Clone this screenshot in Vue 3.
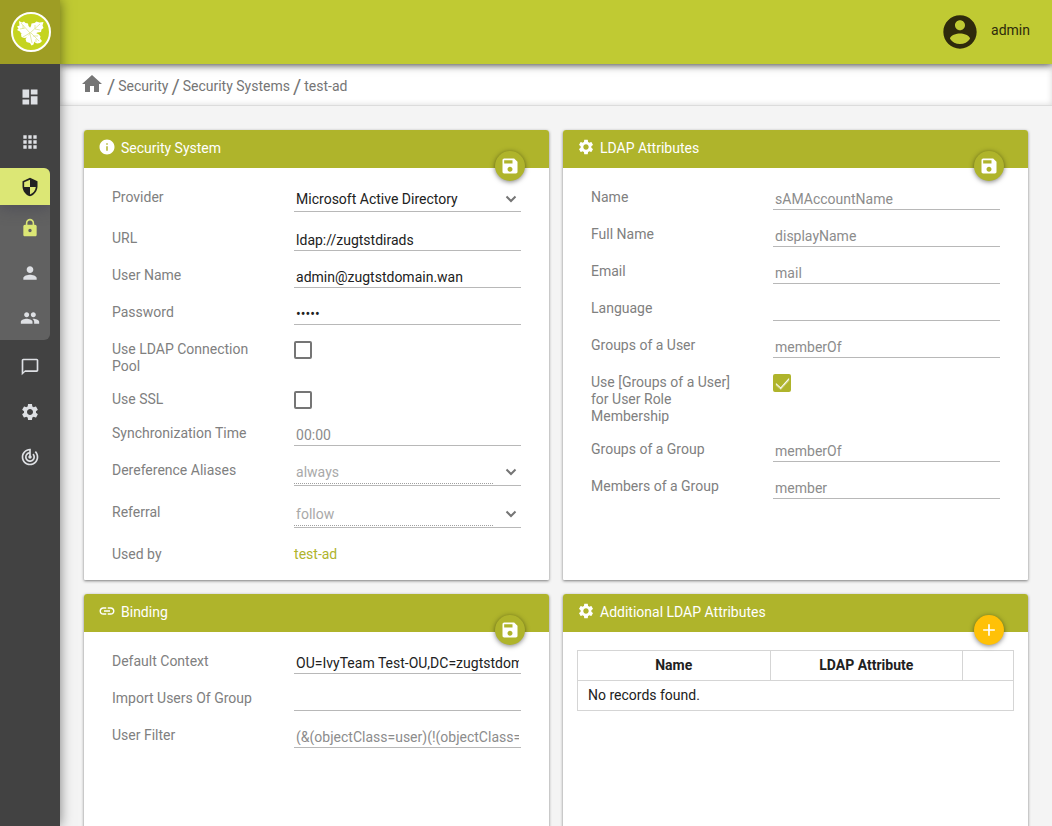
<script setup>
import { ref } from 'vue'

const icons = {
  dashboard: 'M3 13h8V3H3v10zm0 8h8v-6H3v6zm10 0h8V11h-8v10zm0-18v6h8V3h-8z',
  apps: 'M4 8h4V4H4v4zm6 12h4v-4h-4v4zm-6 0h4v-4H4v4zm0-6h4v-4H4v4zm6 0h4v-4h-4v4zm6-10v4h4V4h-4zm-6 4h4V4h-4v4zm6 6h4v-4h-4v4zm0 6h4v-4h-4v4z',
  security: 'M12 1L3 5v6c0 5.55 3.84 10.74 9 12 5.16-1.26 9-6.45 9-12V5l-9-4zm0 10.99h7c-.53 4.12-3.28 7.79-7 8.94V12H5V6.3l7-3.11v8.8z',
  lock: 'M18 8h-1V6c0-2.76-2.24-5-5-5S7 3.24 7 6v2H6c-1.1 0-2 .9-2 2v10c0 1.1.9 2 2 2h12c1.1 0 2-.9 2-2V10c0-1.1-.9-2-2-2zm-6 9c-1.1 0-2-.9-2-2s.9-2 2-2 2 .9 2 2-.9 2-2 2zm3.1-9H8.900V6c0-1.710 1.390-3.100 3.100-3.100 1.710 0 3.100 1.390 3.100 3.100v2z',
  person: 'M12 12c2.210 0 4-1.790 4-4s-1.790-4-4-4-4 1.790-4 4 1.790 4 4 4zm0 2c-2.670 0-8 1.340-8 4v2h16v-2c0-2.660-5.330-4-8-4z',
  people: 'M16 11c1.660 0 2.990-1.340 2.990-3S17.660 5 16 5s-3 1.340-3 3 1.340 3 3 3zm-8 0c1.660 0 2.990-1.340 2.990-3S9.660 5 8 5 5 6.340 5 8s1.340 3 3 3zm0 2c-2.330 0-7 1.170-7 3.500V19h14v-2.500c0-2.330-4.670-3.500-7-3.500zm8 0c-.290 0-.620.020-.970.050 1.160.840 1.970 1.970 1.970 3.450V19h6v-2.500c0-2.330-4.670-3.500-7-3.500z',
  chat: 'M20 2H4c-1.100 0-2 .900-2 2v18l4-4h14c1.100 0 2-.900 2-2V4c0-1.100-.900-2-2-2zm0 14H6l-2 2V4h16v12z',
  settings: 'M19.140 12.940c.040-.300.060-.610.060-.940 0-.320-.020-.640-.070-.940l2.030-1.580c.180-.140.230-.410.120-.610l-1.920-3.320c-.120-.220-.370-.290-.590-.220l-2.390.960c-.500-.380-1.030-.700-1.620-.940l-.360-2.540c-.040-.240-.240-.410-.480-.410h-3.840c-.240 0-.430.170-.470.410l-.360 2.540c-.590.240-1.130.570-1.620.940l-2.390-.960c-.220-.080-.470 0-.590.220L2.740 8.870c-.120.210-.080.470.120.610l2.030 1.580c-.050.300-.090.630-.090.940s.020.640.070.940l-2.030 1.580c-.180.140-.230.410-.120.610l1.920 3.320c.120.220.370.290.590.220l2.390-.960c.500.380 1.030.700 1.620.940l.360 2.540c.050.240.240.410.480.410h3.840c.240 0 .440-.170.470-.410l.360-2.540c.590-.240 1.130-.560 1.620-.940l2.390.960c.220.080.470 0 .590-.220l1.920-3.320c.120-.220.070-.470-.120-.610l-2.010-1.580zM12 15.600c-1.980 0-3.600-1.620-3.600-3.600s1.620-3.600 3.600-3.600 3.600 1.620 3.600 3.600-1.620 3.600-3.600 3.600z',
  track: 'M19.070 4.930l-1.410 1.410C19.100 7.790 20 9.790 20 12c0 4.420-3.580 8-8 8s-8-3.580-8-8c0-4.080 3.050-7.440 7-7.930v2.020C8.160 6.570 6 9.030 6 12c0 3.310 2.690 6 6 6s6-2.690 6-6c0-1.660-.670-3.160-1.760-4.240l-1.410 1.410C15.550 9.900 16 10.900 16 12c0 2.210-1.790 4-4 4s-4-1.790-4-4c0-1.860 1.280-3.410 3-3.860v2.140c-.600.350-1 .980-1 1.720 0 1.100.900 2 2 2s2-.900 2-2c0-.740-.400-1.380-1-1.720V2h-1C6.480 2 2 6.480 2 12s4.480 10 10 10 10-4.480 10-10c0-2.760-1.120-5.260-2.930-7.070z',
  home: 'M10 20v-6h4v6h5v-8h3L12 3 2 12h3v8z',
  account: 'M12 2C6.480 2 2 6.480 2 12s4.480 10 10 10 10-4.480 10-10S17.520 2 12 2zm0 3c1.660 0 3 1.340 3 3s-1.340 3-3 3-3-1.340-3-3 1.340-3 3-3zm0 14.200c-2.500 0-4.710-1.280-6-3.220.030-1.990 4-3.080 6-3.080 1.990 0 5.970 1.090 6 3.080-1.290 1.940-3.500 3.220-6 3.220z',
  info: 'M12 2C6.480 2 2 6.480 2 12s4.480 10 10 10 10-4.480 10-10S17.520 2 12 2zm1 15h-2v-6h2v6zm0-8h-2V7h2v2z',
  link: 'M3.900 12c0-1.710 1.390-3.100 3.100-3.100h4V7H7c-2.760 0-5 2.240-5 5s2.240 5 5 5h4v-1.900H7c-1.710 0-3.100-1.390-3.100-3.100zM8 13h8v-2H8v2zm9-6h-4v1.900h4c1.710 0 3.100 1.390 3.100 3.100s-1.390 3.100-3.100 3.100h-4V17h4c2.760 0 5-2.240 5-5s-2.240-5-5-5z',
  save: 'M17 3H5c-1.110 0-2 .900-2 2v14c0 1.100.890 2 2 2h14c1.100 0 2-.900 2-2V7l-4-4zm-5 16c-1.660 0-3-1.340-3-3s1.340-3 3-3 3 1.340 3 3-1.340 3-3 3zm3-10H5V5h10v4z',
  add: 'M19 13h-6v6h-2v-6H5v-2h6V5h2v6h6v2z'
}

const mainNav = [
  { icon: 'dashboard', label: 'Dashboard' },
  { icon: 'apps', label: 'Applications' }
]
const subNav = [
  { icon: 'lock', label: 'Security Systems', current: true },
  { icon: 'person', label: 'Users' },
  { icon: 'people', label: 'Roles' }
]
const lowerNav = [
  { icon: 'chat', label: 'Notifications' },
  { icon: 'settings', label: 'System' },
  { icon: 'track', label: 'Monitor' }
]
const crumbs = ['Security', 'Security Systems', 'test-ad']

const panels = ref([
  {
    title: 'Security System', icon: 'info', action: 'save',
    fields: [
      { id: 'provider', label: 'Provider', type: 'select', value: 'Microsoft Active Directory' },
      { id: 'url', label: 'URL', type: 'text', value: 'ldap://zugtstdirads' },
      { id: 'username', label: 'User Name', type: 'text', value: 'admin@zugtstdomain.wan' },
      { id: 'password', label: 'Password', type: 'password', value: 'admin' },
      { id: 'pool', label: 'Use LDAP Connection Pool', type: 'checkbox', value: false },
      { id: 'ssl', label: 'Use SSL', type: 'checkbox', value: false },
      { id: 'sync', label: 'Synchronization Time', type: 'text', value: '', placeholder: '00:00' },
      { id: 'deref', label: 'Dereference Aliases', type: 'select', value: 'always', disabled: true },
      { id: 'referral', label: 'Referral', type: 'select', value: 'follow', disabled: true },
      { id: 'usedby', label: 'Used by', type: 'link', value: 'test-ad' }
    ]
  },
  {
    title: 'LDAP Attributes', icon: 'settings', action: 'save',
    fields: [
      { id: 'name', label: 'Name', type: 'text', value: '', placeholder: 'sAMAccountName' },
      { id: 'fullname', label: 'Full Name', type: 'text', value: '', placeholder: 'displayName' },
      { id: 'email', label: 'Email', type: 'text', value: '', placeholder: 'mail' },
      { id: 'language', label: 'Language', type: 'text', value: '' },
      { id: 'usergroups', label: 'Groups of a User', type: 'text', value: '', placeholder: 'memberOf' },
      { id: 'membership', label: 'Use [Groups of a User] for User Role Membership', type: 'checkbox', value: true },
      { id: 'groupgroups', label: 'Groups of a Group', type: 'text', value: '', placeholder: 'memberOf' },
      { id: 'members', label: 'Members of a Group', type: 'text', value: '', placeholder: 'member' }
    ]
  },
  {
    title: 'Binding', icon: 'link', action: 'save',
    fields: [
      { id: 'context', label: 'Default Context', type: 'text', value: 'OU=IvyTeam Test-OU,DC=zugtstdomain,DC=wan' },
      { id: 'import', label: 'Import Users Of Group', type: 'text', value: '' },
      { id: 'filter', label: 'User Filter', type: 'text', value: '', placeholder: '(&(objectClass=user)(!(objectClass=computer)))' }
    ]
  },
  { title: 'Additional LDAP Attributes', icon: 'settings', action: 'add', table: true }
])
</script>

<template>
  <div class="shell">
    <aside class="sidebar">
      <a class="logo" href="#" aria-label="Start page">
        <svg width="42" height="42" viewBox="0 0 42 42">
          <circle cx="21" cy="21" r="19" fill="#c5d41f" stroke="#fff" stroke-width="2" />
          <g fill="#fff">
            <path d="M20 22c-3 1.500-7 1.800-9 0.500l-1-2-3-1.500 1.500-1.500-1.500-2 2.500-1-0.500-4.500 3 1.500 2-1 1.500 1.500 2.500 0.500 0.500 2.500 2 2z" />
            <path d="M20 22c-0.500-3-0.500-5 1-7l0.500-2.500 3-0.500 2-1.500 3 1 4-0.500-1 3.500 1 2.500-2 1.500-0.500 2.500-3.500 0.500-3 1.500z" />
            <path d="M20 22l-2.500 4.500-3.500 0.500-2.500-1-0.500-3z" />
            <path d="M21 21l5 1 3 1.500 1.500 2-0.500 2 2 2.500-2 2-3 0.500-2-1-3-3-2-4z" />
            <path d="M20.500 22l1.500 4 2.500 4-1 3.500-2 1-1.500-2.500-3.500-1-1-3 2-2.500z" />
          </g>
          <g fill="none" stroke="#d9e27c" stroke-width="0.700">
            <path d="M20 22l-9-10M20 22l10-9M20 22l-7 4M21 22l8 8M20 23l2 9M13 14v4M15 17l-5 1M25 14v4l5 1M23 25l5 0M26 28v3" />
          </g>
        </svg>
      </a>
      <nav class="menu">
        <a v-for="n in mainNav" :key="n.icon" href="#" class="item" :aria-label="n.label">
          <svg class="icon" viewBox="0 0 24 24"><path :d="icons[n.icon]" /></svg>
        </a>
        <div class="group">
          <a href="#" class="item active" aria-label="Security">
            <svg class="icon" viewBox="0 0 24 24"><path :d="icons.security" /></svg>
          </a>
          <div class="submenu">
            <a v-for="n in subNav" :key="n.icon" href="#" class="subitem" :class="{ current: n.current }" :aria-label="n.label">
              <svg class="icon" viewBox="0 0 24 24"><path :d="icons[n.icon]" /></svg>
            </a>
          </div>
        </div>
        <a v-for="n in lowerNav" :key="n.icon" href="#" class="item" :aria-label="n.label">
          <svg class="icon" viewBox="0 0 24 24"><path :d="icons[n.icon]" /></svg>
        </a>
      </nav>
    </aside>

    <div class="page">
      <header class="topbar">
        <button class="user" type="button">
          <svg class="avatar" viewBox="0 0 24 24"><path :d="icons.account" /></svg>
          <span class="username">admin</span>
        </button>
      </header>

      <nav class="crumbs" aria-label="Breadcrumb">
        <a href="#" class="home" aria-label="Home">
          <svg viewBox="0 0 24 24"><path :d="icons.home" /></svg>
        </a>
        <template v-for="c in crumbs" :key="c">
          <span class="slash">/</span>
          <a href="#">{{ c }}</a>
        </template>
      </nav>

      <main class="content">
        <section v-for="p in panels" :key="p.title" class="panel">
          <div class="panel-head">
            <svg class="head-icon" viewBox="0 0 24 24"><path :d="icons[p.icon]" /></svg>
            <h2>{{ p.title }}</h2>
          </div>
          <button type="button" class="fab" :class="p.action" :aria-label="p.action">
            <svg class="icon" viewBox="0 0 24 24"><path :d="icons[p.action]" /></svg>
          </button>

          <div v-if="p.table" class="table-wrap">
            <table>
              <thead>
                <tr><th>Name</th><th>LDAP Attribute</th><th class="narrow"></th></tr>
              </thead>
              <tbody>
                <tr><td colspan="3">No records found.</td></tr>
              </tbody>
            </table>
          </div>

          <form v-else class="form" @submit.prevent>
            <div v-for="f in p.fields" :key="f.id" class="row">
              <label class="label" :for="f.id">{{ f.label }}</label>
              <div class="control" :class="f.type">
                <div v-if="f.type === 'select'" class="picker" :class="{ disabled: f.disabled }">
                  <select :id="f.id" :disabled="f.disabled"><option>{{ f.value }}</option></select>
                  <svg class="chevron" viewBox="0 0 12 12"><path d="M1.500 3.500L6 8l4.500-4.500" /></svg>
                </div>
                <input v-else-if="f.type === 'checkbox'" :id="f.id" v-model="f.value" type="checkbox" class="check" />
                <a v-else-if="f.type === 'link'" :id="f.id" href="#" class="used">{{ f.value }}</a>
                <input v-else :id="f.id" v-model="f.value" :type="f.type" :placeholder="f.placeholder" class="input" />
              </div>
            </div>
          </form>
        </section>
      </main>
    </div>
  </div>
</template>

<style>
body {
  margin: 0;
  background: #f4f4f4;
}
</style>

<style scoped>
.shell,
.shell * {
  box-sizing: border-box;
}
.shell {
  display: flex;
  height: 100vh;
  font-family: Roboto, "Liberation Sans", sans-serif;
  font-size: 14px;
  line-height: 17px;
  color: #212121;
}
a {
  text-decoration: none;
  color: inherit;
}
button,
input,
select {
  font: inherit;
}
.icon {
  display: block;
  width: 20px;
  height: 20px;
  fill: currentColor;
}

.sidebar {
  position: relative;
  z-index: 3;
  flex: none;
  width: 60px;
  background: #424242;
  color: #dee0e4;
  box-shadow: 0 0 12px rgba(0, 0, 0, 0.5);
}
.logo {
  display: flex;
  align-items: center;
  justify-content: center;
  height: 64px;
  padding-left: 2px;
  background: #9e9d24;
}
.menu {
  display: flex;
  flex-direction: column;
  gap: 8px;
  padding-top: 14px;
}
.item {
  display: flex;
  align-items: center;
  height: 37px;
  padding-left: 20px;
}
.group {
  width: 50px;
  border-radius: 0 6px 6px 0;
  overflow: hidden;
  background: #616161;
}
.active {
  position: relative;
  background: #dce775;
  color: #212121;
  box-shadow: 0 2px 16px rgba(66, 66, 80, 0.7);
}
.subitem {
  display: flex;
  align-items: center;
  height: 45px;
  padding-left: 20px;
}
.current {
  color: #dce775;
}

.page {
  display: flex;
  flex-direction: column;
  flex: 1;
  min-width: 0;
}
.topbar {
  position: relative;
  z-index: 2;
  display: flex;
  flex: none;
  align-items: center;
  justify-content: flex-end;
  height: 64px;
  padding-right: 22px;
  background: #c0ca33;
  box-shadow: 0 1px 8px rgba(0, 0, 0, 0.7);
}
.user {
  display: flex;
  align-items: center;
  gap: 11px;
  padding: 0;
  border: 0;
  background: none;
  color: #2e2a0c;
}
.avatar {
  width: 40px;
  height: 40px;
  fill: currentColor;
}
.username {
  padding-bottom: 4px;
}

.crumbs {
  display: flex;
  flex: none;
  align-items: center;
  gap: 3px;
  height: 42px;
  padding: 4px 20px 0;
  background: #fff;
  border-bottom: 1px solid #dcdcdc;
  box-shadow: inset 0 0 6px rgba(0, 0, 0, 0.15);
  color: #757575;
}
.home svg {
  display: block;
  width: 24px;
  height: 24px;
  margin-bottom: 5px;
  fill: currentColor;
}
.slash {
  font-size: 20px;
  line-height: 24px;
}

.content {
  display: grid;
  flex: 1;
  grid-template-columns: repeat(2, minmax(0, 1fr));
  grid-auto-rows: max-content;
  align-content: start;
  gap: 14px;
  min-height: 0;
  padding: 24px;
  overflow-y: auto;
  scrollbar-width: none;
}
.panel {
  position: relative;
  min-height: 300px;
  background: #fff;
  border-radius: 3px 3px 1px 1px;
  box-shadow: 0 1px 3px rgba(0, 0, 0, 0.5);
}
.panel-head {
  display: flex;
  align-items: center;
  gap: 5px;
  height: 38px;
  padding: 0 14px 2px;
  border-radius: 3px 3px 0 0;
  background: #afb42b;
  color: #fff;
}
.head-icon {
  width: 18px;
  height: 18px;
  margin-bottom: 2px;
  fill: currentColor;
}
h2 {
  margin: 0;
  font-size: 14px;
  font-weight: 400;
}
.fab {
  position: absolute;
  top: 21px;
  right: 24px;
  display: flex;
  align-items: center;
  justify-content: center;
  width: 30px;
  height: 30px;
  padding: 0;
  border: 0;
  border-radius: 50%;
  background: #afb42b;
  color: #fff;
  box-shadow: 0 1px 5px rgba(0, 0, 0, 0.5);
}
.fab.add {
  background: #ffc107;
}

.form {
  padding: 14px 14px 7px;
}
.row {
  display: grid;
  grid-template-columns: 5fr 7fr;
  align-items: start;
  min-height: 34px;
}
.label {
  padding: 7px 14px 9px;
  color: #808080;
}
.control {
  min-width: 0;
  padding: 7px 14px;
}
.control.text,
.control.password {
  padding-bottom: 9px;
}
.control.select {
  padding-bottom: 11px;
}
.input {
  display: block;
  width: 100%;
  height: 21px;
  padding: 0 2px;
  border: 0;
  border-bottom: 1px solid #b8b8b8;
  border-radius: 0;
  outline: 0;
  background: none;
  color: #212121;
}
.input::placeholder {
  color: #8c8c8c;
  opacity: 1;
}
.picker {
  display: flex;
  align-items: flex-start;
  height: 23px;
  border-bottom: 1px solid #b8b8b8;
}
.picker.disabled {
  height: 24px;
}
select {
  width: calc(100% - 28px);
  height: 22px;
  padding: 0 2px 1px;
  border: 0;
  border-radius: 0;
  appearance: none;
  background: none;
  color: #212121;
  opacity: 1;
}
.disabled select {
  border-bottom: 1px dotted #a0a0a0;
  color: #a9a9a9;
}
select:disabled {
  opacity: 1;
}
.chevron {
  width: 12px;
  height: 12px;
  margin: 4px 0 0 12px;
  fill: none;
  stroke: #757575;
  stroke-width: 2;
}
.check {
  display: block;
  width: 18px;
  height: 18px;
  margin: 0;
  border: 2px solid #757575;
  border-radius: 2px;
  appearance: none;
}
.check:checked {
  border-color: #afb42b;
  background: #afb42b;
}
.check:checked::after {
  content: "";
  display: block;
  width: 6px;
  height: 12px;
  margin: 0 auto;
  border: solid #fff;
  border-width: 0 1px 1px 0;
  outline: 0;
  transform: translateY(-1px) rotate(42deg);
  box-shadow: 1px 1px 0 rgba(255, 255, 255, 0.4);
}
.used {
  color: #afb42b;
}

.table-wrap {
  padding: 18px 14px 14px;
}
table {
  width: 100%;
  table-layout: fixed;
  border-collapse: collapse;
}
th,
td {
  height: 30px;
  padding: 0 10px;
  border: 1px solid #d5d5d5;
}
td {
  text-align: left;
}
th {
  font-weight: 700;
}
.narrow {
  width: 51px;
}
</style>
